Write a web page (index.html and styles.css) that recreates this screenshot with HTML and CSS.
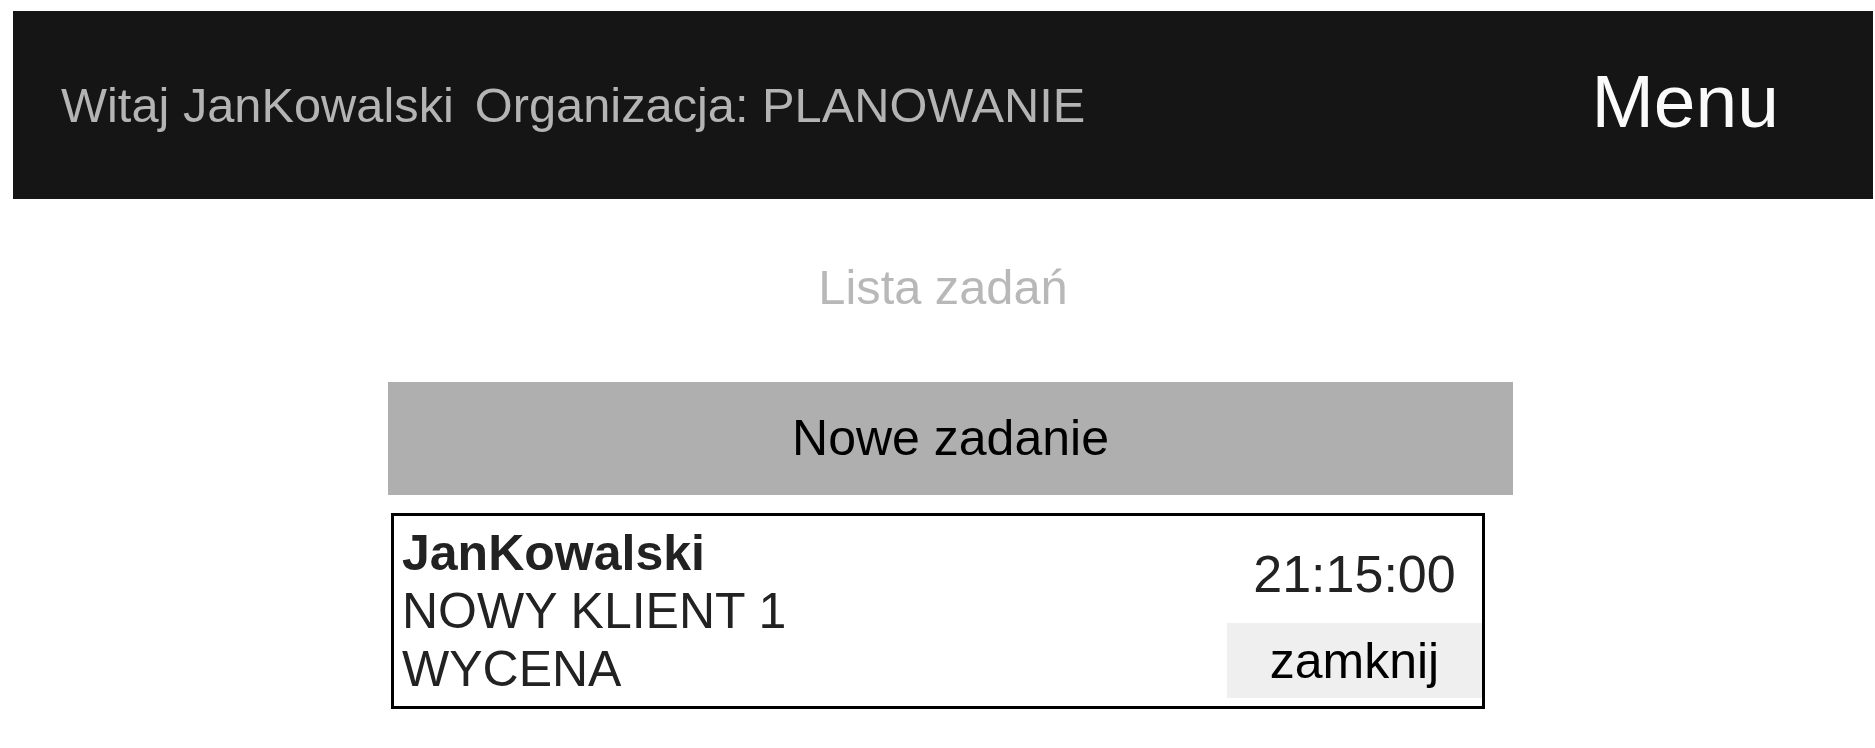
FILE: index.html
```html
<!DOCTYPE html>
<html lang="pl">
<head>
<meta charset="utf-8">
<title>Lista zadań</title>
<link rel="stylesheet" href="styles.css">
</head>
<body>
<div class="page">
  <header class="topbar">
    <div class="greeting"><span>Witaj JanKowalski</span><span>Organizacja: PLANOWANIE</span></div>
    <div class="menu">Menu</div>
  </header>
  <main class="content">
    <h1 class="title">Lista zadań</h1>
    <div class="tasks">
      <button class="new-task">Nowe zadanie</button>
      <div class="task-card">
        <div class="task-info">
          <div class="task-user">JanKowalski</div>
          <div>NOWY KLIENT 1</div>
          <div>WYCENA</div>
        </div>
        <div class="task-side">
          <div class="task-time">21:15:00</div>
          <button class="close-btn">zamknij</button>
        </div>
      </div>
    </div>
  </main>
</div>
</body>
</html>
```
FILE: styles.css
```css
body {
  margin: 11px 2px 8px 13px;
  background: #ffffff;
  font-family: "Liberation Sans", Arial, sans-serif;
}

.page {
  display: flex;
  flex-direction: column;
}

.topbar {
  height: 188px;
  box-sizing: border-box;
  background: #151515;
  display: flex;
  align-items: center;
  justify-content: space-between;
  padding: 0 94px 0 48px;
}

.greeting {
  display: flex;
  gap: 21px;
  font-size: 48.75px;
  line-height: normal;
  color: #b4b4b4;
}

.menu {
  font-size: 75px;
  line-height: normal;
  color: #fafafa;
  margin-bottom: 9px;
}

.title {
  margin: 60px 0 0;
  font-size: 48.75px;
  font-weight: normal;
  line-height: normal;
  color: #b8b8b8;
  text-align: center;
}

.tasks {
  display: flex;
  flex-direction: column;
  align-items: flex-start;
  gap: 18.5px;
  margin-top: 67px;
  padding-left: 375px;
}

.new-task {
  width: 1125px;
  height: 112.5px;
  padding: 0;
  border: none;
  background: #afafaf;
  color: #000000;
  font-family: "Liberation Sans", Arial, sans-serif;
  font-size: 50px;
  line-height: normal;
}

.task-card {
  margin-left: 3px;
  width: 1094px;
  box-sizing: border-box;
  border: 3px solid #000000;
  padding: 8px 0 8px 8px;
  display: flex;
  justify-content: space-between;
  color: #222222;
  font-size: 50px;
  line-height: normal;
}

.task-user {
  font-weight: bold;
}

.task-side {
  width: 255px;
  display: flex;
  flex-direction: column;
}

.task-time {
  flex: 1;
  display: flex;
  align-items: center;
  justify-content: center;
  font-size: 52px;
}

.close-btn {
  height: 75px;
  padding: 0;
  border: none;
  background: #efefef;
  color: #000000;
  font-family: "Liberation Sans", Arial, sans-serif;
  font-size: 50px;
  line-height: normal;
}
```
